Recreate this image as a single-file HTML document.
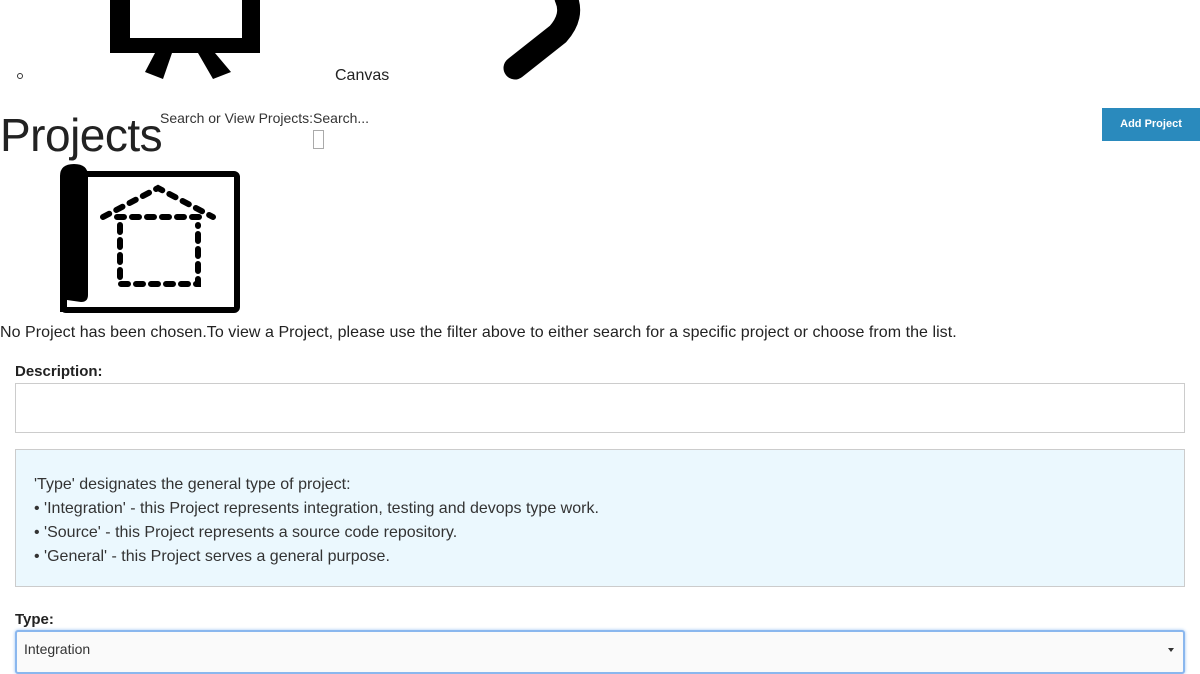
<!DOCTYPE html>
<html><head><meta charset="utf-8"><style>
body{margin:0;width:1200px;height:667px;overflow:hidden;background:#fff;font-family:"Liberation Sans",Arial,sans-serif;color:#222;position:relative}
.a{position:absolute;white-space:nowrap}
</style></head><body>
<svg class="a" style="left:0;top:0" width="600" height="90">
<rect x="110" y="-10" width="150" height="63" fill="#000"/>
<rect x="130" y="-10" width="112" height="48" fill="#fff"/>
<polygon points="155,53 172,53 163,79 145,72" fill="#000"/>
<polygon points="198,53 215,53 231,72 213,79" fill="#000"/>
<path d="M566,-2 Q574,16 558,34 L515,68" stroke="#000" stroke-width="23" fill="none" stroke-linecap="round"/>
<circle cx="20" cy="76" r="2.5" fill="none" stroke="#333" stroke-width="1"/>
</svg>
<div class="a" style="left:335px;top:67px;font-size:16px">Canvas</div>
<div class="a" style="left:0;top:108px;font-size:46px;letter-spacing:-0.5px">Projects</div>
<div class="a" style="left:160px;top:110px;font-size:14px;color:#333">Search or View Projects:Search...</div>
<div class="a" style="left:313px;top:130px;width:9px;height:17px;border:1px solid #aaa"></div>
<div class="a" style="left:1102px;top:108px;width:98px;height:33px;background:#2a8abd;color:#fff;font-size:11px;font-weight:bold;text-align:center;line-height:33px">Add Project</div>
<svg class="a" style="left:55px;top:160px" width="190" height="158">
<rect x="8" y="14" width="174" height="136" rx="3" fill="none" stroke="#000" stroke-width="6"/>
<path d="M5,16 Q5,4 19,4 Q33,4 33,16 L33,135 Q33,142 26,142 L12,140 L12,152 L5,152 Z" fill="#000"/>
<g stroke="#000" stroke-width="6" stroke-linecap="round" stroke-dasharray="7,8" fill="none">
<path d="M48,57 L103,28 L158,57"/>
<path d="M62,57 L150,57"/>
<path d="M65,65 L65,124 L143,124 L143,65"/>
</g>
</svg>
<div class="a" style="left:0;top:324px;font-size:16px;letter-spacing:0.05px">No Project has been chosen.To view a Project, please use the filter above to either search for a specific project or choose from the list.</div>
<div class="a" style="left:15px;top:363px;font-size:15px;font-weight:bold">Description:</div>
<div class="a" style="left:15px;top:383px;width:1168px;height:48px;border:1px solid #ccc"></div>
<div class="a" style="left:15px;top:449px;width:1168px;height:136px;border:1px solid #ccc;background:#ebf8fe"></div>
<div class="a" style="left:34px;top:473px;font-size:16px;line-height:24px;color:#333">'Type' designates the general type of project:<br>• 'Integration' - this Project represents integration, testing and devops type work.<br>• 'Source' - this Project represents a source code repository.<br>• 'General' - this Project serves a general purpose.</div>
<div class="a" style="left:15px;top:611px;font-size:15px;font-weight:bold">Type:</div>
<div class="a" style="left:15px;top:630px;width:1166px;height:40px;border:2px solid #8ab7ee;border-radius:3px;background:#fafafa;box-shadow:0 0 3px #9cc3f2"></div>
<div class="a" style="left:24px;top:641px;font-size:14px;color:#333">Integration</div>
<div class="a" style="left:1168px;top:648px;width:0;height:0;border-left:3px solid transparent;border-right:3px solid transparent;border-top:4px solid #333"></div>
</body></html>
